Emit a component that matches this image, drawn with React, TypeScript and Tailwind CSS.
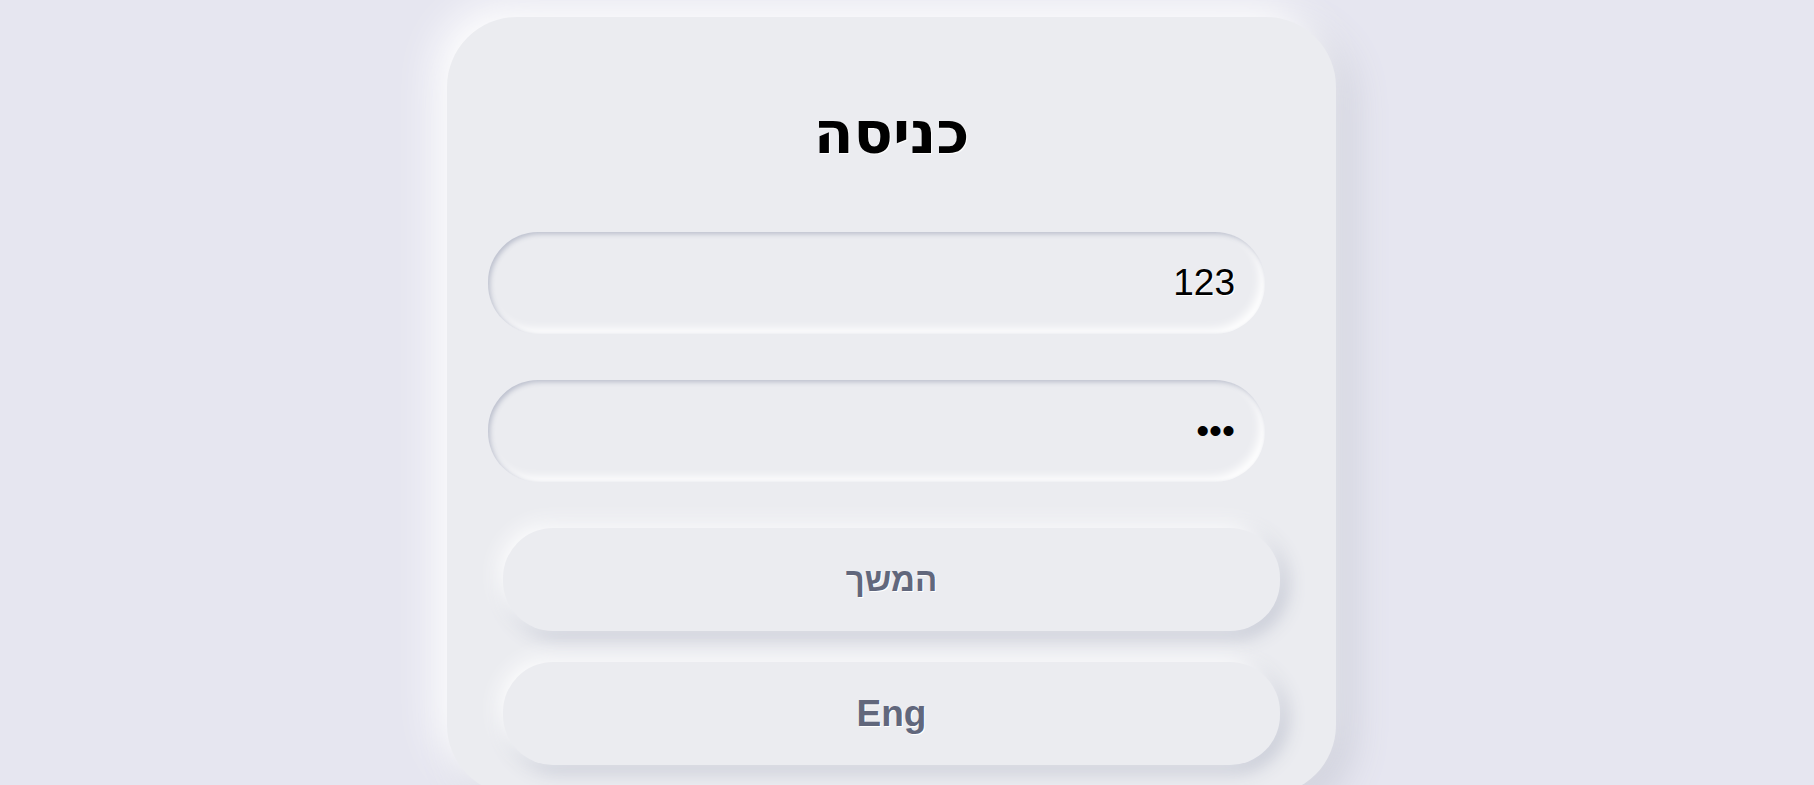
import React from "react";

const font = { fontFamily: '"Liberation Sans", Arial, sans-serif' };

export default function App() {
  return (
    <div
      className="min-h-screen w-full bg-[#e6e6f0] flex justify-center pr-[31px] pt-[17px] overflow-hidden"
      style={font}
    >
      <div
        dir="rtl"
        className="w-[889px] shrink-0 rounded-[70px] bg-[#ebecf0] pt-[84px] pb-[30px] flex flex-col shadow-[-12px_-12px_40px_#ffffff,12px_12px_40px_#c8cad6]"
      >
        <h1 className="text-center font-['DejaVu_Sans',sans-serif] text-[58px] leading-[64px] font-bold text-black [text-shadow:1px_1px_1px_#ffffff]">
          כניסה
        </h1>

        <input
          type="text"
          defaultValue="123"
          readOnly
          className="mt-[67px] mr-[71px] w-[777px] h-[102px] rounded-[50px] bg-[#ebecf0] px-[30px] text-[37px] text-black text-right outline-none shadow-[inset_2px_2px_5px_#babecc,inset_-5px_-5px_10px_#ffffff] [text-shadow:1px_1px_0_#ffffff]"
        />

        <input
          type="password"
          defaultValue="123"
          readOnly
          className="mt-[46px] mr-[71px] w-[777px] h-[102px] rounded-[50px] bg-[#ebecf0] px-[30px] text-[37px] text-black text-right outline-none shadow-[inset_2px_2px_5px_#babecc,inset_-5px_-5px_10px_#ffffff]"
        />

        <button className="mt-[46px] mx-auto w-[777px] h-[103px] rounded-[50px] bg-[#ebecf0] text-[33px] font-bold text-[#61677c] shadow-[-5px_-5px_20px_#ffffff,5px_5px_20px_#babecc] [text-shadow:1px_1px_0_#ffffff]">
          המשך
        </button>

        <button className="mt-[31px] mx-auto w-[777px] h-[103px] rounded-[50px] bg-[#ebecf0] text-[37px] font-bold text-[#61677c] shadow-[-5px_-5px_20px_#ffffff,5px_5px_20px_#babecc] [text-shadow:1px_1px_0_#ffffff]">
          Eng
        </button>
      </div>
    </div>
  );
}
